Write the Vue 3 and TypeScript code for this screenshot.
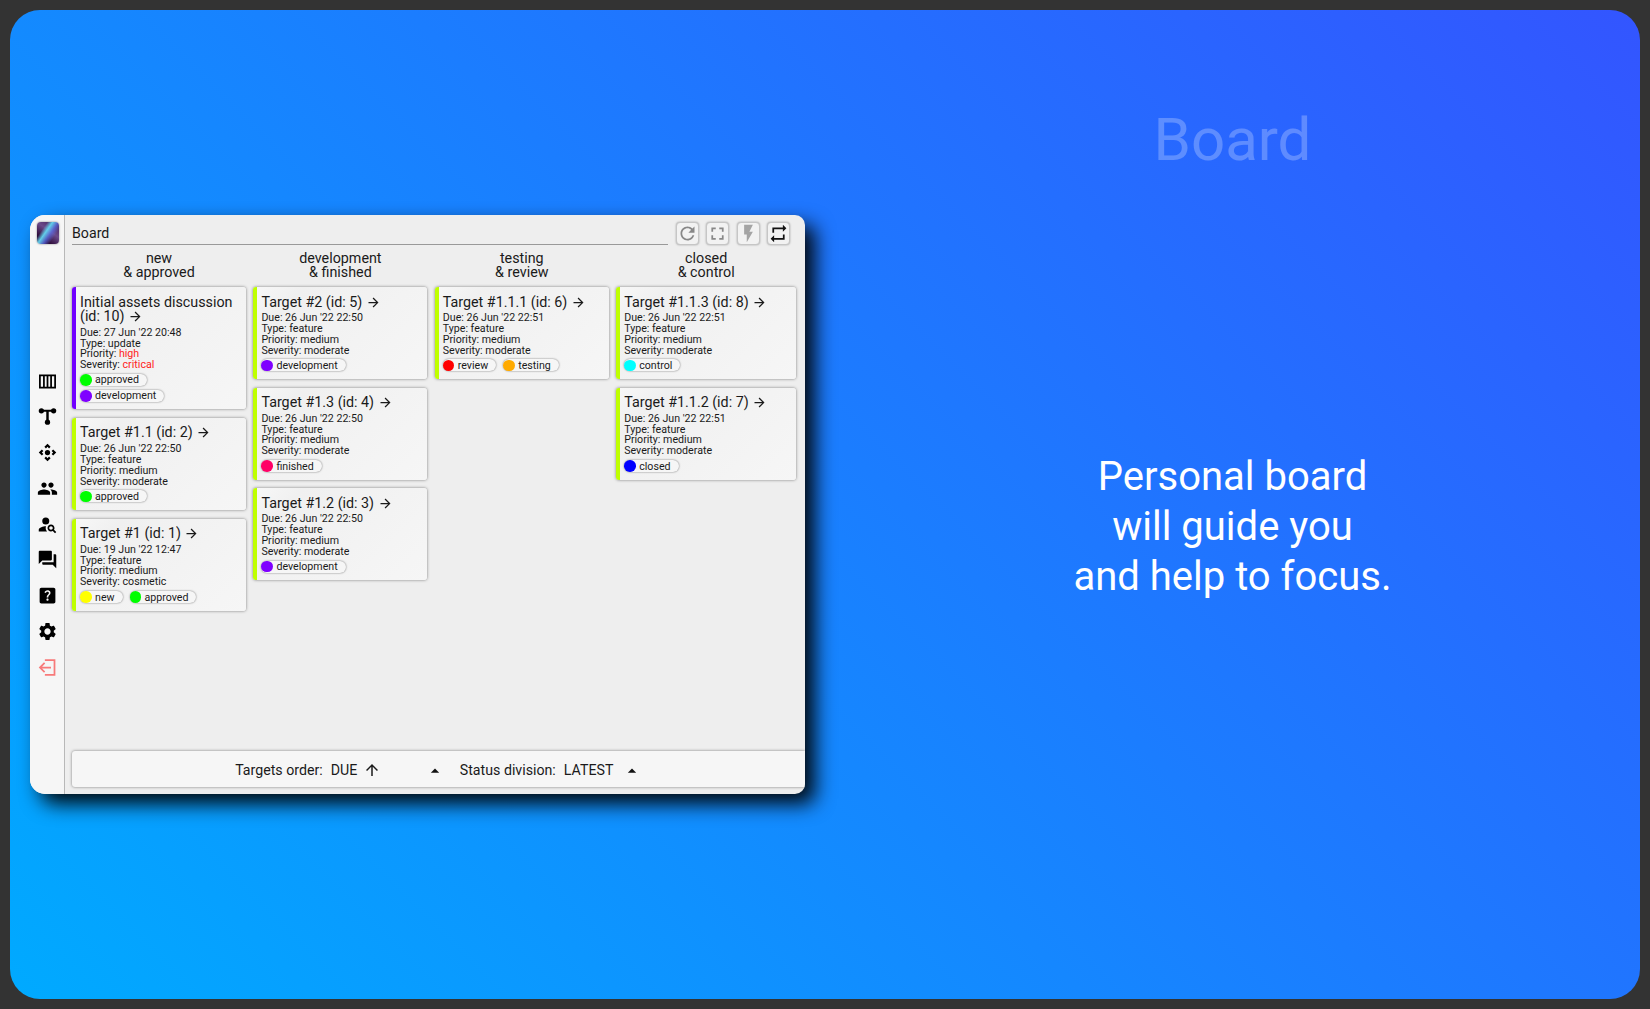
<script setup lang="ts">
interface Tag {
  label: string;
  color: string;
}

interface Target {
  title: string;
  due: string;
  type: string;
  priority: string;
  severity: string;
  urgent?: boolean;
  accent: string;
  tagRows: Tag[][];
}

interface Column {
  top: string;
  bottom: string;
  targets: Target[];
}

const lime = "#bfff00";
const violet = "#7000ff";

const tags: Record<string, Tag> = {
  new: { label: "new", color: "#ffff00" },
  approved: { label: "approved", color: "#00ff00" },
  development: { label: "development", color: "#7f00ff" },
  finished: { label: "finished", color: "#ff0066" },
  review: { label: "review", color: "#ff0000" },
  testing: { label: "testing", color: "#ffaa00" },
  control: { label: "control", color: "#00ffff" },
  closed: { label: "closed", color: "#0000ff" },
};

function feature(title: string, due: string, tagRows: Tag[][], severity = "moderate"): Target {
  return { title, due, type: "feature", priority: "medium", severity, accent: lime, tagRows };
}

const columns: Column[] = [
  {
    top: "new",
    bottom: "& approved",
    targets: [
      {
        title: "Initial assets discussion (id: 10)",
        due: "27 Jun '22 20:48",
        type: "update",
        priority: "high",
        severity: "critical",
        urgent: true,
        accent: violet,
        tagRows: [[tags.approved], [tags.development]],
      },
      feature("Target #1.1 (id: 2)", "26 Jun '22 22:50", [[tags.approved]]),
      feature("Target #1 (id: 1)", "19 Jun '22 12:47", [[tags.new, tags.approved]], "cosmetic"),
    ],
  },
  {
    top: "development",
    bottom: "& finished",
    targets: [
      feature("Target #2 (id: 5)", "26 Jun '22 22:50", [[tags.development]]),
      feature("Target #1.3 (id: 4)", "26 Jun '22 22:50", [[tags.finished]]),
      feature("Target #1.2 (id: 3)", "26 Jun '22 22:50", [[tags.development]]),
    ],
  },
  {
    top: "testing",
    bottom: "& review",
    targets: [feature("Target #1.1.1 (id: 6)", "26 Jun '22 22:51", [[tags.review, tags.testing]])],
  },
  {
    top: "closed",
    bottom: "& control",
    targets: [
      feature("Target #1.1.3 (id: 8)", "26 Jun '22 22:51", [[tags.control]]),
      feature("Target #1.1.2 (id: 7)", "26 Jun '22 22:51", [[tags.closed]]),
    ],
  },
];
</script>

<template>
  <div class="stage">
    <div class="panel">
      <div class="left">
        <div class="window">
          <aside class="sidebar">
            <div class="logo"></div>
            <nav class="nav">
              <svg viewBox="0 0 24 24">
                <path fill-rule="evenodd" d="M2.3 4h19.4v16H2.3zM4.3 6v12h2.6V6zM8.9 6v12h2.1V6zM13 6v12h2.1V6zM17.1 6v12h2.6V6z" />
              </svg>
              <svg viewBox="0 0 24 24">
                <circle cx="5" cy="5.5" r="3" />
                <circle cx="19" cy="5.5" r="3" />
                <circle cx="12" cy="18.5" r="3" />
                <path d="M5 4.3h14v2.4h-5.6V18h-2.8V6.7H5z" />
              </svg>
              <svg viewBox="0 0 24 24">
                <path d="M15.54 5.54L13.77 7.3 12 5.54 10.23 7.3 8.46 5.54 12 2zm2.92 10l-1.76-1.77L18.46 12l-1.76-1.77 1.76-1.77L22 12zm-10 2.92l1.77-1.76L12 18.46l1.77-1.76 1.77 1.76L12 22zm-2.92-10l1.76 1.77L5.54 12l1.76 1.77-1.76 1.77L2 12z" />
                <circle cx="12" cy="12" r="3" />
              </svg>
              <svg viewBox="0 0 24 24">
                <path d="M16 11c1.66 0 2.99-1.34 2.99-3S17.66 5 16 5c-1.66 0-3 1.34-3 3s1.34 3 3 3zm-8 0c1.66 0 2.99-1.34 2.99-3S9.66 5 8 5C6.34 5 5 6.34 5 8s1.34 3 3 3zm0 2c-2.33 0-7 1.17-7 3.5V19h14v-2.5c0-2.33-4.67-3.5-7-3.5zm8 0c-.29 0-.62.02-.97.05 1.16.84 1.97 1.97 1.97 3.45V19h6v-2.5c0-2.33-4.67-3.5-7-3.5z" />
              </svg>
              <svg viewBox="0 0 24 24">
                <circle cx="10" cy="8" r="4" />
                <path d="M10.35 14.01C7.62 13.91 2 15.27 2 18v2h9.54c-2.47-2.76-1.23-5.89-1.19-5.99z" />
                <path d="M19.43 18.02c.36-.59.57-1.28.57-2.02 0-2.21-1.79-4-4-4s-4 1.79-4 4 1.79 4 4 4c.74 0 1.43-.22 2.02-.57L20.59 22 22 20.59l-2.57-2.57zM16 18c-1.1 0-2-.9-2-2s.9-2 2-2 2 .9 2 2-.9 2-2 2z" />
              </svg>
              <svg viewBox="0 0 24 24">
                <path d="M21 6h-2v9H6v2c0 .55.45 1 1 1h11l4 4V7c0-.55-.45-1-1-1zm-4 6V3c0-.55-.45-1-1-1H3c-.55 0-1 .45-1 1v14l4-4h10c.55 0 1-.45 1-1z" />
              </svg>
              <svg viewBox="0 0 24 24">
                <path d="M19 3H5c-1.1 0-2 .9-2 2v14c0 1.1.9 2 2 2h14c1.1 0 2-.9 2-2V5c0-1.1-.9-2-2-2zm-6.99 15c-.7 0-1.26-.56-1.26-1.26 0-.71.56-1.25 1.26-1.25.71 0 1.25.54 1.25 1.25-.01.69-.54 1.26-1.25 1.26zm3.01-7.4c-.76 1.11-1.48 1.46-1.87 2.17-.16.29-.22.48-.22 1.41h-1.82c0-.49-.08-1.29.31-1.98.49-.87 1.42-1.39 1.96-2.16.57-.81.25-2.33-1.37-2.33-1.06 0-1.58.8-1.8 1.48l-1.65-.7C9.01 7.15 10.22 6 11.99 6c1.48 0 2.49.67 3.01 1.52.44.72.7 2.07.03 3.08z" />
              </svg>
              <svg viewBox="0 0 24 24">
                <path d="M19.14 12.94c.04-.3.06-.61.06-.94 0-.32-.02-.64-.07-.94l2.03-1.58c.18-.14.23-.41.12-.61l-1.92-3.32c-.12-.22-.37-.29-.59-.22l-2.39.96c-.5-.38-1.03-.7-1.62-.94l-.36-2.54c-.04-.24-.24-.41-.48-.41h-3.84c-.24 0-.43.17-.47.41l-.36 2.54c-.59.24-1.13.57-1.62.94l-2.39-.96c-.22-.08-.47 0-.59.22L2.74 8.87c-.12.21-.08.47.12.61l2.03 1.58c-.05.3-.09.63-.09.94s.02.64.07.94l-2.03 1.58c-.18.14-.23.41-.12.61l1.92 3.32c.12.22.37.29.59.22l2.39-.96c.5.38 1.03.7 1.62.94l.36 2.54c.05.24.24.41.48.41h3.84c.24 0 .44-.17.47-.41l.36-2.54c.59-.24 1.13-.56 1.62-.94l2.39.96c.22.08.47 0 .59-.22l1.92-3.32c.12-.22.07-.47-.12-.61l-2.01-1.58zM12 15.6c-1.98 0-3.6-1.62-3.6-3.6s1.62-3.6 3.6-3.6 3.6 1.62 3.6 3.6-1.62 3.6-3.6 3.6z" />
              </svg>
              <svg viewBox="0 0 24 24" class="logout">
                <path d="M9 2.5h12v19H9v-2h10v-15H9zM2 12l6-6 1.4 1.4L5.8 11H16v2H5.8l3.6 3.6L8 18z" />
              </svg>
            </nav>
          </aside>

          <main class="main">
            <header class="header">
              <div class="title">Board</div>
              <div class="tools">
                <button class="tool muted">
                  <svg viewBox="0 0 24 24">
                    <path d="M17.65 6.35C16.2 4.9 14.21 4 12 4c-4.42 0-7.99 3.58-7.99 8s3.57 8 7.99 8c3.73 0 6.84-2.55 7.73-6h-2.08c-.82 2.33-3.04 4-5.65 4-3.31 0-6-2.69-6-6s2.69-6 6-6c1.66 0 3.14.69 4.22 1.78L13 11h7V4l-2.35 2.35z" />
                  </svg>
                </button>
                <button class="tool muted">
                  <svg viewBox="0 0 24 24">
                    <path d="M7 14H5v5h5v-2H7v-3zm-2-4h2V7h3V5H5v5zm12 7h-3v2h5v-5h-2v3zM14 5v2h3v3h2V5h-5z" />
                  </svg>
                </button>
                <button class="tool muted faint">
                  <svg viewBox="0 0 24 24">
                    <path d="M7 2v11h3v9l7-12h-4l4-8z" />
                  </svg>
                </button>
                <button class="tool">
                  <svg viewBox="0 0 24 24">
                    <path d="M7 7h10v3l4-4-4-4v3H5v6h2V7zm10 10H7v-3l-4 4 4 4v-3h12v-6h-2v4z" />
                  </svg>
                </button>
              </div>
            </header>

            <div class="board">
              <section v-for="col in columns" :key="col.top" class="column">
                <div class="column-head">
                  <div>{{ col.top }}</div>
                  <div>{{ col.bottom }}</div>
                </div>
                <article
                  v-for="t in col.targets"
                  :key="t.title"
                  class="card"
                  :style="{ borderLeftColor: t.accent }"
                >
                  <div class="card-title">
                    {{ t.title }}
                    <svg viewBox="0 0 24 24" class="arrow">
                      <path d="M12 4l-1.41 1.41L16.17 11H4v2h12.17l-5.58 5.59L12 20l8-8z" />
                    </svg>
                  </div>
                  <div class="card-info">
                    <div>Due: {{ t.due }}</div>
                    <div>Type: {{ t.type }}</div>
                    <div>Priority: <span :class="{ urgent: t.urgent }">{{ t.priority }}</span></div>
                    <div>Severity: <span :class="{ urgent: t.urgent }">{{ t.severity }}</span></div>
                  </div>
                  <div class="tag-rows">
                    <div v-for="(row, i) in t.tagRows" :key="i" class="tag-row">
                      <span v-for="tag in row" :key="tag.label" class="tag">
                        <i class="dot" :style="{ background: tag.color }"></i>{{ tag.label }}
                      </span>
                    </div>
                  </div>
                </article>
              </section>
            </div>

            <footer class="footer">
              <div class="select first">
                <span class="select-label">Targets order:</span>
                <span>DUE</span>
                <svg viewBox="0 0 24 24" class="up">
                  <path d="M4 12l1.41 1.41L11 7.83V20h2V7.83l5.58 5.59L20 12l-8-8-8 8z" />
                </svg>
                <svg viewBox="0 0 24 24" class="drop">
                  <path d="M7 14l5-5 5 5z" />
                </svg>
              </div>
              <div class="select">
                <span class="select-label">Status division:</span>
                <span>LATEST</span>
                <svg viewBox="0 0 24 24" class="drop">
                  <path d="M7 14l5-5 5 5z" />
                </svg>
              </div>
            </footer>
          </main>
        </div>
      </div>

      <div class="right">
        <div class="headline">Board</div>
        <div class="pitch">
          <div>Personal board</div>
          <div>will guide you</div>
          <div>and help to focus.</div>
        </div>
      </div>
    </div>
  </div>
</template>

<style>
html,
body {
  margin: 0;
  background: #333;
}
</style>

<style scoped>
.stage {
  box-sizing: border-box;
  width: 1650px;
  height: 1009px;
  padding: 10px;
  background: #333;
  font-family: Roboto, "Liberation Sans", sans-serif;
  color: #1a1a1a;
}

.panel {
  display: grid;
  grid-template-columns: 815px 815px;
  height: 100%;
  border-radius: 30px;
  background: linear-gradient(45deg, #00aaff, #3355ff);
  overflow: hidden;
}

.left {
  display: flex;
  align-items: center;
  padding-left: 20px;
}

.window {
  display: flex;
  width: 775px;
  height: 579px;
  border-radius: 15px 10px 10px 15px;
  background: #eee;
  box-shadow: 10px 10px 20px rgba(0, 0, 0, 0.95);
  overflow: hidden;
}

.sidebar {
  flex: none;
  display: flex;
  flex-direction: column;
  align-items: center;
  width: 35px;
  padding-left: 1px;
  background: #f6f6f6;
  border-right: 1px solid #b8b8b8;
  box-sizing: border-box;
}

.logo {
  width: 22px;
  height: 22px;
  margin-top: 7px;
  border-radius: 4px;
  box-shadow: 0 0 2px #777;
  background:
    linear-gradient(125deg, transparent 28%, rgba(100, 215, 240, 0.95) 42%, rgba(90, 110, 230, 0.75) 58%, transparent 74%),
    linear-gradient(35deg, #2e0d3a 25%, #6b4a8a 58%, #3e1a50);
}

.nav {
  display: flex;
  flex-direction: column;
  align-items: center;
  gap: 14.8px;
  margin-top: 126.5px;
}

.nav svg {
  display: block;
  width: 21px;
  height: 21px;
  fill: #000;
}

.nav svg.logout {
  fill: #f77a7a;
}

.main {
  flex: 1;
  min-width: 0;
  display: flex;
  flex-direction: column;
  padding: 7px 0 7px 7px;
}

.header {
  display: flex;
  align-items: flex-end;
  height: 23px;
}

.title {
  width: 596px;
  height: 22px;
  line-height: 23px;
  font-size: 14.2px;
  border-bottom: 1px solid #999;
}

.tools {
  display: flex;
  gap: 7.3px;
  margin-left: 8px;
}

.tool {
  display: flex;
  align-items: center;
  justify-content: center;
  width: 23px;
  height: 23px;
  padding: 0;
  border: 1px solid #c6c6c6;
  border-radius: 4px;
  background: #f2f2f2;
  box-shadow: 0 0 2px rgba(0, 0, 0, 0.35);
}

.tool svg {
  width: 21px;
  height: 21px;
  fill: #111;
}

.tool.muted svg {
  fill: #888;
}

.tool.faint svg {
  fill: #a4a4a4;
}

.board {
  flex: 1;
  display: grid;
  grid-template-columns: 174px 174px 174px 180px;
  column-gap: 7.4px;
  align-content: start;
}

.column {
  display: flex;
  flex-direction: column;
  gap: 8.6px;
}

.column-head {
  height: 28px;
  padding-top: 6px;
  margin-bottom: -0.6px;
  font-size: 14.3px;
  line-height: 14px;
  text-align: center;
}

.card {
  box-sizing: border-box;
  padding: 7.5px 6px 7.5px 4px;
  border-left: 4px solid #bfff00;
  border-radius: 3px;
  background: linear-gradient(135deg, #f7f7f7, #f0f0f0 18%, #f6f6f6);
  box-shadow: 0 0 3px rgba(0, 0, 0, 0.5);
}

.card-title {
  font-size: 14.3px;
  line-height: 14.4px;
}

.arrow {
  display: inline-block;
  width: 15px;
  height: 15px;
  margin-top: -2px;
  vertical-align: -3px;
  fill: #1a1a1a;
}

.card-info {
  margin-top: 3.8px;
  font-size: 10.65px;
  line-height: 10.8px;
}

.urgent {
  color: #ff2222;
}

.tag-rows {
  display: flex;
  flex-direction: column;
  gap: 4px;
  margin-top: 3px;
}

.tag-row {
  display: flex;
  gap: 7px;
}

.tag {
  display: inline-flex;
  align-items: center;
  gap: 3.5px;
  height: 12px;
  padding-right: 8px;
  border-radius: 6px;
  font-size: 10.65px;
  background: #f6f6f6;
  box-shadow: 0 0 2px rgba(0, 0, 0, 0.55);
}

.dot {
  width: 11.5px;
  height: 11.5px;
  border-radius: 50%;
}

.footer {
  flex: none;
  display: flex;
  align-items: center;
  justify-content: center;
  box-sizing: border-box;
  height: 36px;
  padding-top: 1px;
  border-radius: 3px 0 0 3px;
  background: #f6f6f6;
  box-shadow: 0 0 3px rgba(0, 0, 0, 0.5);
  font-size: 14.2px;
}

.select {
  display: flex;
  align-items: center;
}

.select.first {
  margin-right: 14.5px;
}

.select-label {
  margin-right: 8px;
}

.up {
  width: 18px;
  height: 18px;
  margin-left: 6px;
  margin-right: 38px;
  fill: #1a1a1a;
}

.drop {
  width: 20px;
  height: 20px;
  margin-left: 6px;
  margin-top: 2px;
  fill: #111;
}

.select:not(.first) .drop {
  margin-left: 8.5px;
}

.right {
  display: flex;
  flex-direction: column;
  align-items: center;
  color: #fff;
  text-align: center;
}

.headline {
  margin-top: 95px;
  font-size: 60px;
  line-height: 70px;
  color: rgba(255, 255, 255, 0.25);
}

.pitch {
  margin-top: 276.5px;
  font-size: 40px;
  line-height: 50px;
}
</style>
